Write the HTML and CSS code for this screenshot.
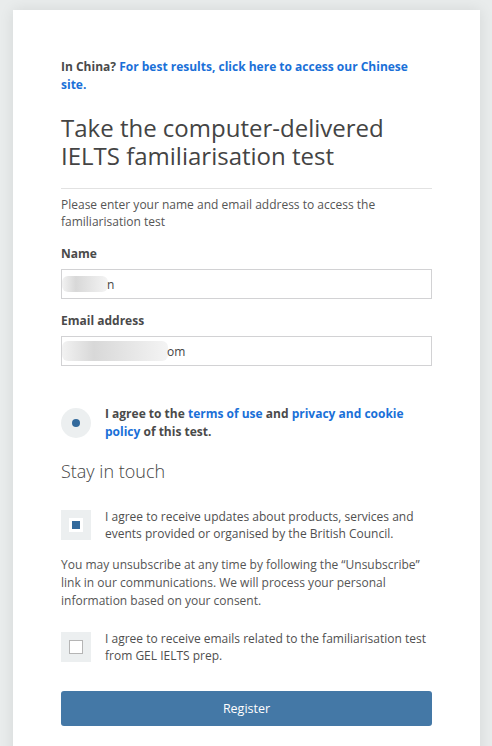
FILE: index.html
```html
<!DOCTYPE html>
<html lang="en">
<head>
<meta charset="utf-8">
<title>IELTS familiarisation test</title>
<link rel="stylesheet" href="styles.css">
</head>
<body>
<main class="card">
  <p class="china">In China? <a href="#">For best results, click here to access our Chinese site.</a></p>
  <h1 class="title">Take the computer-delivered IELTS familiarisation test</h1>
  <hr class="divider">
  <p class="intro">Please enter your name and email address to access the familiarisation test</p>
  <form class="form">
    <label class="label" for="name">Name</label>
    <div class="input"><span class="blur blur-name"></span><span class="typed">n</span></div>
    <label class="label label-email" for="email">Email address</label>
    <div class="input"><span class="blur blur-email"></span><span class="typed">om</span></div>

    <div class="check-row radio-row">
      <span class="radio"><span class="radio-dot"></span></span>
      <span class="check-text bold">I agree to the <a href="#">terms of use</a> and <a href="#">privacy and cookie policy</a> of this test.</span>
    </div>

    <h2 class="subtitle">Stay in touch</h2>

    <div class="check-row row-updates">
      <span class="box"><span class="box-inner checked"></span></span>
      <span class="check-text">I agree to receive updates about products, services and events provided or organised by the British Council.</span>
    </div>

    <p class="unsub">You may unsubscribe at any time by following the “Unsubscribe” link in our communications. We will process your personal information based on your consent.</p>

    <div class="check-row row-emails">
      <span class="box"><span class="box-inner"></span></span>
      <span class="check-text">I agree to receive emails related to the familiarisation test from GEL IELTS prep.</span>
    </div>

    <button type="button" class="register">Register</button>
  </form>
</main>
</body>
</html>
```

FILE: styles.css
```css
html, body {
  margin: 0;
  padding: 0;
}
body {
  background: #e9ecec;
  font-family: "Open Sans", "Noto Sans", "Liberation Sans", sans-serif;
  color: #4a4a4a;
  height: 746px;
  overflow: hidden;
}
.card {
  display: block;
  width: 371px;
  margin: 10px 0 0 13px;
  padding: 48px 48px 40px;
  background: #fff;
  box-shadow: 0 0 14px rgba(0, 0, 0, 0.09);
}
a {
  color: #1a70d8;
  text-decoration: none;
}
p, h1, h2 {
  margin: 0;
}
.china {
  font-size: 12px;
  line-height: 18px;
  font-weight: 700;
  color: #4a4a4a;
}
.title {
  margin-top: 20px;
  font-size: 24px;
  line-height: 28px;
  font-weight: 400;
  color: #444;
}
.divider {
  margin: 18px 0 0;
  border: 0;
  border-top: 1px solid #e2e2e2;
}
.intro {
  margin-top: 7px;
  font-size: 12px;
  line-height: 17px;
  color: #555;
}
.form {
  display: flex;
  flex-direction: column;
}
.label {
  margin-top: 15px;
  font-size: 12px;
  line-height: 17px;
  font-weight: 700;
  color: #4a4a4a;
}
.label-email {
  margin-top: 13px;
}
.input {
  margin-top: 7px;
  height: 28px;
  border: 1px solid #d2d2d4;
  display: flex;
  align-items: center;
  font-size: 12px;
  color: #444;
}
.blur {
  display: inline-block;
  height: 16px;
  background: linear-gradient(90deg, #f2f2f2 0%, #d8d8d8 30%, #e4e4e4 60%, #f4f4f4 100%);
  border-radius: 6px;
}
.blur-name {
  width: 46px;
}
.blur-email {
  width: 106px;
  height: 20px;
}
.typed {
  margin-left: -1px;
}
.check-row {
  display: flex;
  align-items: center;
  gap: 14px;
}
.radio-row {
  margin-top: 39px;
}
.radio {
  flex: none;
  width: 30px;
  height: 30px;
  border-radius: 50%;
  background: #eceff0;
  display: flex;
  align-items: center;
  justify-content: center;
}
.radio-dot {
  width: 8px;
  height: 8px;
  border-radius: 50%;
  background: #336a9c;
}
.check-text {
  font-size: 12px;
  line-height: 17px;
  color: #4f4f4f;
}
.check-text.bold {
  font-weight: 700;
  line-height: 18px;
  color: #4a4a4a;
}
.subtitle {
  margin-top: 18px;
  font-size: 18px;
  line-height: 24px;
  font-weight: 300;
  color: #444;
}
.row-updates {
  margin-top: 25px;
}
.box {
  flex: none;
  width: 30px;
  height: 30px;
  background: #eceff0;
  display: flex;
  align-items: center;
  justify-content: center;
}
.box-inner {
  width: 12px;
  height: 12px;
  background: #fff;
  border: 1px solid #b5b5b5;
}
.box-inner.checked {
  width: 8px;
  height: 8px;
  border: 3px solid #fff;
  background: #336a9c;
}
.unsub {
  margin-top: 14px;
  font-size: 12px;
  line-height: 18px;
  color: #555;
}
.row-emails {
  margin-top: 20px;
}
.register {
  margin-top: 27px;
  height: 35px;
  border: 0;
  border-radius: 3px;
  background: #4478a6;
  color: #fff;
  font-family: inherit;
  font-size: 12.5px;
  cursor: pointer;
}
```
